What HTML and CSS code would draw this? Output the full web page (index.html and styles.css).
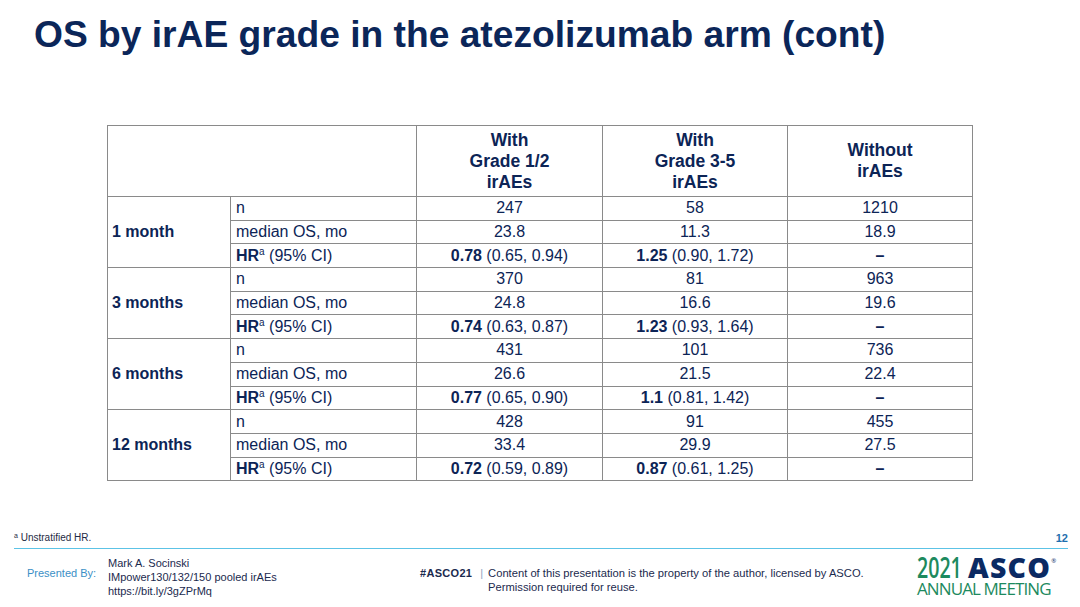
FILE: index.html
```html
<!DOCTYPE html>
<html>
<head>
<meta charset="utf-8">
<link rel="stylesheet" href="styles.css">
</head>
<body>
<div class="slide">
  <h1 class="title">OS by irAE grade in the atezolizumab arm (cont)</h1>
  <div class="table-wrap">
    <table class="data">
      <colgroup>
        <col class="c-time"><col class="c-stat"><col class="c-val"><col class="c-val2"><col class="c-val2">
      </colgroup>
      <thead>
        <tr>
          <th colspan="2"></th>
          <th>With<br>Grade 1/2<br>irAEs</th>
          <th>With<br>Grade 3-5<br>irAEs</th>
          <th>Without<br>irAEs</th>
        </tr>
      </thead>
      <tbody>
        <tr><td class="grp" rowspan="3">1 month</td><td class="lbl">n</td><td>247</td><td>58</td><td>1210</td></tr>
        <tr><td class="lbl">median OS, mo</td><td>23.8</td><td>11.3</td><td>18.9</td></tr>
        <tr><td class="lbl"><b>HR</b><sup>a</sup> (95% CI)</td><td><b>0.78</b> (0.65, 0.94)</td><td><b>1.25</b> (0.90, 1.72)</td><td><b>–</b></td></tr>

        <tr><td class="grp" rowspan="3">3 months</td><td class="lbl">n</td><td>370</td><td>81</td><td>963</td></tr>
        <tr><td class="lbl">median OS, mo</td><td>24.8</td><td>16.6</td><td>19.6</td></tr>
        <tr><td class="lbl"><b>HR</b><sup>a</sup> (95% CI)</td><td><b>0.74</b> (0.63, 0.87)</td><td><b>1.23</b> (0.93, 1.64)</td><td><b>–</b></td></tr>

        <tr><td class="grp" rowspan="3">6 months</td><td class="lbl">n</td><td>431</td><td>101</td><td>736</td></tr>
        <tr><td class="lbl">median OS, mo</td><td>26.6</td><td>21.5</td><td>22.4</td></tr>
        <tr><td class="lbl"><b>HR</b><sup>a</sup> (95% CI)</td><td><b>0.77</b> (0.65, 0.90)</td><td><b>1.1</b> (0.81, 1.42)</td><td><b>–</b></td></tr>

        <tr><td class="grp" rowspan="3">12 months</td><td class="lbl">n</td><td>428</td><td>91</td><td>455</td></tr>
        <tr><td class="lbl">median OS, mo</td><td>33.4</td><td>29.9</td><td>27.5</td></tr>
        <tr><td class="lbl"><b>HR</b><sup>a</sup> (95% CI)</td><td><b>0.72</b> (0.59, 0.89)</td><td><b>0.87</b> (0.61, 1.25)</td><td><b>–</b></td></tr>
      </tbody>
    </table>
  </div>

  <div class="notes">
    <span class="footnote"><sup>a</sup> Unstratified HR.</span>
    <span class="pageno">12</span>
  </div>
  <div class="rule"></div>

  <footer class="footer">
    <div class="presented">Presented By:</div>
    <div class="author">Mark A. Socinski<br>IMpower130/132/150 pooled irAEs<br>https://bit.ly/3gZPrMq</div>
    <div class="legal">
      <span class="tag">#ASCO21</span><span class="sep">|</span>
      <span class="legal-text">Content of this presentation is the property of the author, licensed by ASCO.<br>Permission required for reuse.</span>
    </div>
    <div class="logo">
      <div class="logo-top"><span class="yr">2021</span><span class="asco">ASCO</span><span class="reg">®</span></div>
      <div class="logo-bottom">ANNUAL MEETING</div>
    </div>
  </footer>
</div>
</body>
</html>
```

FILE: styles.css
```css
html, body {
  margin: 0;
  padding: 0;
  background: #ffffff;
}

.slide {
  width: 1080px;
  height: 607px;
  overflow: hidden;
  display: flex;
  flex-direction: column;
  font-family: "Liberation Sans", Arial, sans-serif;
  color: #0c2456;
}

.title {
  margin: 13px 0 0 34px;
  font-size: 37.2px;
  line-height: 42px;
  font-weight: 700;
  color: #0b2659;
}

.table-wrap {
  margin: 70px 0 0 107px;
  width: 865px;
}

.data {
  border-collapse: collapse;
  table-layout: fixed;
  width: 865px;
  font-size: 16px;
  color: #0c2456;
}

.c-time { width: 123px; }
.c-stat { width: 186px; }
.c-val { width: 186px; }
.c-val2 { width: 185px; }

.data th,
.data td {
  border: 1px solid #8a8a8a;
  padding: 0 5px;
  vertical-align: middle;
}

.data th {
  height: 70px;
  font-size: 17.5px;
  line-height: 21px;
  font-weight: 700;
  text-align: center;
}

.data td {
  height: 22.7px;
  line-height: 18px;
  text-align: center;
  white-space: nowrap;
}

.data td.grp {
  text-align: left;
  font-weight: 700;
  padding-left: 4px;
}

.data td.lbl {
  text-align: left;
  padding-left: 5px;
}

.data sup {
  font-size: 10px;
  line-height: 0;
  vertical-align: 6px;
}

.notes {
  margin: 50px 12px 0 14px;
  height: 14px;
  display: flex;
  justify-content: space-between;
  align-items: center;
  font-size: 10px;
  line-height: 14px;
  color: #1e2a44;
}

.notes sup {
  font-size: 7px;
  vertical-align: 3px;
  line-height: 0;
}

.pageno {
  font-weight: 700;
  font-size: 11px;
  color: #1f6fae;
}

.rule {
  margin: 3px 12px 0 14px;
  height: 1px;
  background: #5cc3e6;
}

.footer {
  margin-top: 7px;
  display: flex;
  align-items: flex-start;
  font-size: 11px;
  line-height: 14px;
}

.presented {
  margin: 10px 0 0 27px;
  width: 81px;
  color: #3b8fc6;
}

.author {
  width: 312px;
  color: #1b2a4e;
}

.legal {
  margin-top: 10px;
  display: flex;
  align-items: flex-start;
  color: #1b2a4e;
  width: 497px;
}

.tag {
  font-weight: 700;
  letter-spacing: 0.3px;
}

.sep {
  margin: 0 5px 0 8px;
  color: #8aa2c0;
}

.legal-text {
  font-size: 11.2px;
}

.logo {
  margin-top: -2px;
  display: flex;
  flex-direction: column;
  align-items: flex-start;
  font-family: "Open Sans", "Liberation Sans", sans-serif;
}

.logo-top {
  display: flex;
  align-items: baseline;
  line-height: 27px;
  height: 27px;
}

.yr {
  display: inline-block;
  font-size: 28px;
  font-weight: 600;
  color: #1d8a5e;
  transform: scaleX(0.7);
  transform-origin: left center;
  margin-right: -19px;
}

.asco {
  margin-left: 6px;
  font-size: 28.5px;
  font-weight: 800;
  color: #0b2a63;
  letter-spacing: 1.2px;
}

.reg {
  font-size: 6px;
  line-height: 8px;
  color: #0b2a63;
  align-self: flex-start;
  margin-top: 3px;
}

.logo-bottom {
  font-size: 17px;
  line-height: 16px;
  color: #1d8a5e;
  letter-spacing: -0.9px;
}
```
